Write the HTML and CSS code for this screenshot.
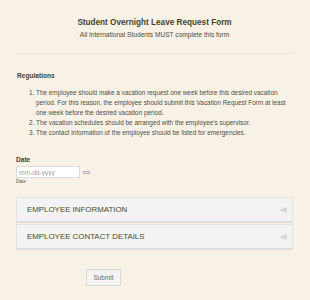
FILE: index.html
```html
<!DOCTYPE html>
<html lang="en">
  <head>
    <meta charset="utf-8" />
    <title>Student Overnight Leave Request Form</title>
    <link rel="stylesheet" href="styles.css">
  </head>
  <body>
    <div class="f-page">
      <!-- Header -->
      <header class="f-header">
        <h1 class="f-header__title">Student Overnight Leave Request Form</h1>
        <p class="f-header__sub">All International Students MUST complete this form</p>
      </header>

      <!-- Regulations -->
      <section class="f-rules">
        <h2 class="f-rules__title">Regulations</h2>
        <ol class="f-rules__list">
          <li>The employee should make a vacation request one week before this desired vacation period. For this reason, the employee should submit this Vacation Request Form at least one week before the desired vacation period.</li>
          <li>The vacation schedules should be arranged with the employee's supervisor.</li>
          <li>The contact information of the employee should be listed for emergencies.</li>
        </ol>
      </section>

      <!-- Date -->
      <div class="f-field">
        <label class="f-field__label" for="date">Date</label>
        <div class="f-field__row">
          <input class="f-field__input" id="date" type="text" placeholder="mm-dd-yyyy">
          <span class="f-field__btn"></span>
        </div>
        <span class="f-field__hint">Date</span>
      </div>

      <!-- Collapsible sections -->
      <div class="f-acc">
        <div class="f-acc__item">
          <span>EMPLOYEE INFORMATION</span>
          <span class="f-acc__arrow"></span>
        </div>
        <div class="f-acc__item">
          <span>EMPLOYEE CONTACT DETAILS</span>
          <span class="f-acc__arrow"></span>
        </div>
      </div>

      <div class="f-actions">
        <button class="f-submit" type="button">Submit</button>
      </div>
    </div>
  </body>
</html>
```

FILE: styles.css
```css
/* Base */
html { box-sizing: border-box; }
*, *:before, *:after { box-sizing: inherit; }
body {
  margin: 0;
  font-family: "Liberation Sans", Arial, sans-serif;
  background-color: #f8f1e6;
  color: #4a4a32;
}
.f-page {
  padding: 0 17px 0 16px;
}
/* Header */
.f-header {
  text-align: center;
  padding-top: 18px;
  padding-bottom: 13px;
  border-bottom: 1px solid #ece6dc;
}
.f-header__title {
  margin: 0;
  font-size: 8.2px;
  line-height: 10px;
  font-weight: bold;
  color: #45452a;
}
.f-header__sub {
  margin: 2px 0 0;
  font-size: 6.6px;
  line-height: 10px;
  color: #4e5040;
}
/* Regulations */
.f-rules {
  padding-top: 17px;
}
.f-rules__title {
  margin: 0 0 0 1px;
  font-size: 6.6px;
  line-height: 10px;
  font-weight: bold;
  color: #45452a;
}
.f-rules__list {
  margin: 7px 0 0;
  padding-left: 20px;
  font-size: 6.4px;
  line-height: 10px;
  color: #505040;
}
/* Date field */
.f-field {
  padding-top: 17px;
}
.f-field__label {
  display: block;
  font-size: 6.6px;
  line-height: 10px;
  font-weight: bold;
  color: #45452a;
}
.f-field__row {
  display: flex;
  align-items: center;
  gap: 3px;
  margin-top: 1px;
}
.f-field__input {
  width: 64px;
  height: 12px;
  padding: 0 2px;
  border: 1px solid #dcdcdc;
  background: #fff;
  font-family: inherit;
  font-size: 6.6px;
  color: #555;
}
.f-field__input::placeholder { color: #a0a0a0; }
.f-field__btn {
  width: 7px;
  height: 3px;
  border: 1px solid #b8b8b8;
  background: #e8e8e8;
}
.f-field__hint {
  display: block;
  margin-top: 1px;
  font-size: 4.6px;
  line-height: 6px;
  color: #55553a;
}
/* Accordion */
.f-acc {
  margin-top: 12px;
  display: flex;
  flex-direction: column;
  gap: 1px;
}
.f-acc__item {
  display: flex;
  align-items: center;
  justify-content: space-between;
  height: 26px;
  padding: 0 5px 0 10px;
  background: #f3f3f3;
  border: 1px solid #e4e4e4;
  border-bottom: 2px solid #dedede;
  font-size: 7.9px;
  color: #4a4a2a;
}
.f-acc__arrow {
  width: 0;
  height: 0;
  border-top: 3.5px solid transparent;
  border-bottom: 3.5px solid transparent;
  border-right: 8px solid #d6d6d6;
}
/* Submit */
.f-actions {
  padding: 16px 0 0 70px;
}
.f-submit {
  width: 35px;
  height: 17px;
  padding: 0;
  background: #f3f3f3;
  border: 1px solid #d8d8d8;
  border-radius: 1px;
  font-family: inherit;
  font-size: 6.4px;
  color: #6a7060;
}
```
